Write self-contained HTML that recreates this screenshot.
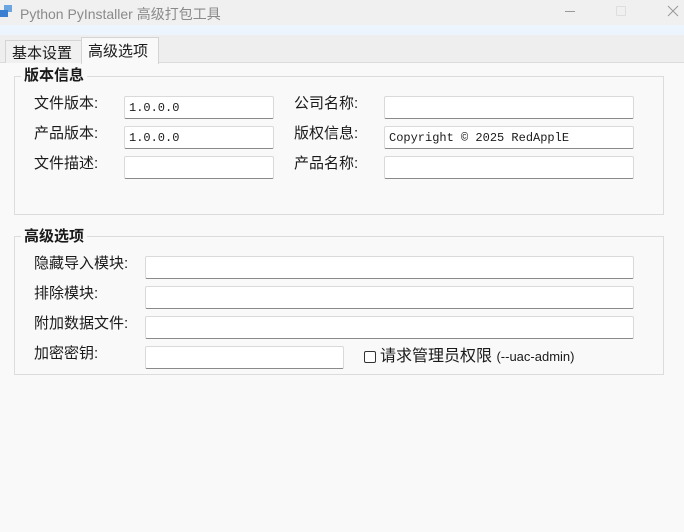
<!DOCTYPE html>
<html><head><meta charset="utf-8"><style>
*{margin:0;padding:0;box-sizing:border-box}
body{width:684px;height:532px;overflow:hidden;background:#f9f9f9;font-family:"Liberation Sans","Noto Sans CJK SC",sans-serif;font-size:14px;color:#1a1a1a;position:relative}
.abs{position:absolute}
.title{left:0;top:0;width:684px;height:25px;background:#f0f0f0}
.strip{left:0;top:25px;width:684px;height:10px;background:#ecf4fd}
.tabbar{left:0;top:35px;width:684px;height:28px;background:#eeeeee;border-bottom:1px solid #dcdcdc}
.tab{top:40px;height:23px;border:1px solid #d4d4d4;border-bottom:none;background:#f0f0f0;padding:1px 6px;font-size:15px}
.sel{top:37px;height:27px;background:#f9f9f9;padding:2px 6px}
.group{border:1px solid #dcdcdc}
.gt{background:#f9f9f9;font-weight:bold;font-size:15px;padding:0 3px;line-height:18px}
.lbl{font-size:15px;line-height:20px}
.inp{background:#fff;border:1px solid #dadada;border-bottom:1px solid #8a8a8a;height:23px;border-radius:2px;font-family:"Liberation Mono","DejaVu Sans Mono",monospace;font-size:12px;padding:3px 4px;line-height:16px}
</style></head><body>
<div class="abs title"></div>
<svg class="abs" style="left:0px;top:4px" width="14" height="16"><rect x="4" y="1" width="8" height="7" fill="#6aa5e0"/><rect x="0" y="6" width="8" height="7" fill="#3a7fd0"/></svg>
<div class="abs" style="left:20px;top:4px;color:#8a8a8a;font-size:14px">Python PyInstaller 高级打包工具</div>
<div class="abs" style="left:565px;top:11px;width:10px;border-top:1px solid #999"></div>
<div class="abs" style="left:616px;top:6px;width:10px;height:10px;border:1px solid #ddd;border-radius:1px"></div>
<svg class="abs" style="left:667px;top:5px" width="12" height="12"><path d="M1 1L11 11M11 1L1 11" stroke="#999" stroke-width="1"/></svg>
<div class="abs strip"></div>
<div class="abs tabbar"></div>
<div class="abs tab" style="left:5px;width:77px">基本设置</div>
<div class="abs tab sel" style="left:81px;width:78px">高级选项</div>

<div class="abs group" style="left:14px;top:76px;width:650px;height:139px"></div>
<div class="abs gt" style="left:21px;top:67px">版本信息</div>
<div class="abs lbl" style="left:34px;top:94px">文件版本:</div>
<div class="abs lbl" style="left:34px;top:124px">产品版本:</div>
<div class="abs lbl" style="left:34px;top:154px">文件描述:</div>
<div class="abs inp" style="left:124px;top:96px;width:150px">1.0.0.0</div>
<div class="abs inp" style="left:124px;top:126px;width:150px">1.0.0.0</div>
<div class="abs inp" style="left:124px;top:156px;width:150px"></div>
<div class="abs lbl" style="left:294px;top:94px">公司名称:</div>
<div class="abs lbl" style="left:294px;top:124px">版权信息:</div>
<div class="abs lbl" style="left:294px;top:154px">产品名称:</div>
<div class="abs inp" style="left:384px;top:96px;width:250px"></div>
<div class="abs inp" style="left:384px;top:126px;width:250px">Copyright © 2025 RedApplE</div>
<div class="abs inp" style="left:384px;top:156px;width:250px"></div>

<div class="abs group" style="left:14px;top:236px;width:650px;height:139px"></div>
<div class="abs gt" style="left:21px;top:228px">高级选项</div>
<div class="abs lbl" style="left:34px;top:254px">隐藏导入模块:</div>
<div class="abs lbl" style="left:34px;top:284px">排除模块:</div>
<div class="abs lbl" style="left:34px;top:314px">附加数据文件:</div>
<div class="abs lbl" style="left:34px;top:344px">加密密钥:</div>
<div class="abs inp" style="left:145px;top:256px;width:489px"></div>
<div class="abs inp" style="left:145px;top:286px;width:489px"></div>
<div class="abs inp" style="left:145px;top:316px;width:489px"></div>
<div class="abs inp" style="left:145px;top:346px;width:199px"></div>
<div class="abs" style="left:364px;top:351px;width:12px;height:12px;border:1px solid #333;border-radius:2px;background:#fff"></div>
<div class="abs lbl" style="left:380px;top:347px;font-size:16px">请求管理员权限 <span style="font-size:13px">(--uac-admin)</span></div>
</body></html>
